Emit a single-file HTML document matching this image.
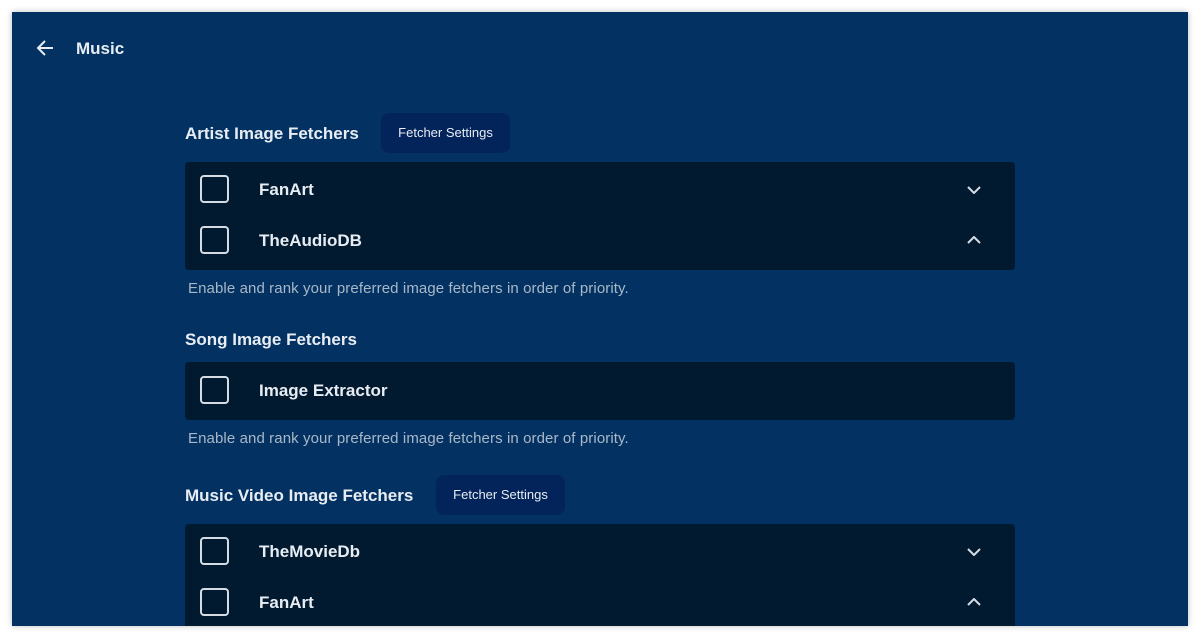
<!DOCTYPE html>
<html><head><style>
*{margin:0;padding:0;box-sizing:border-box}
body{width:1200px;height:638px;background:#fff;position:relative;overflow:hidden;font-family:"Liberation Sans",Arial,sans-serif}
#p{position:absolute;left:12px;top:12px;width:1176px;height:614px;background:#033262;box-shadow:0 0 6px rgba(0,0,0,.25);overflow:hidden}
.a{position:absolute}
.h{color:#e8edf3;font-weight:bold;font-size:17px}
.btn{position:absolute;background:#02245a;border-radius:8px;color:#e8edf3;font-size:13px;text-align:center;line-height:40px;height:40px}
.card{position:absolute;left:173px;width:830px;background:#011a30;border-radius:4px}
.cb{position:absolute;left:15px;width:29px;height:28px;border:2px solid #d6dce4;border-radius:4px}
.t{position:absolute;left:74px;color:#e8edf3;font-weight:bold;font-size:17px}
.help{position:absolute;left:176px;color:#a9b8c8;font-size:15px;letter-spacing:0.1px}
svg.ch{position:absolute;left:782px;width:14px;height:8px}
</style></head><body>
<div id="p">
<svg class="a" style="left:24px;top:27px" width="18" height="18" viewBox="0 0 18 18"><path d="M17 9H2M9 2L2 9l7 7" stroke="#e8edf3" stroke-width="2" fill="none"/></svg>
<div class="a h" style="left:64px;top:27px;font-size:17px">Music</div>

<div class="a h" style="left:173px;top:112px">Artist Image Fetchers</div>
<div class="btn" style="left:369px;top:101px;width:129px">Fetcher Settings</div>
<div class="card" style="top:150px;height:108px">
<div class="cb" style="top:13px"></div><div class="t" style="top:18px">FanArt</div>
<svg class="ch" style="top:24px" viewBox="0 0 14 8"><path d="M1 1l6 6 6-6" stroke="#d6dce4" stroke-width="2" fill="none"/></svg>
<div class="cb" style="top:64px"></div><div class="t" style="top:69px">TheAudioDB</div>
<svg class="ch" style="top:74px" viewBox="0 0 14 8"><path d="M1 7l6-6 6 6" stroke="#d6dce4" stroke-width="2" fill="none"/></svg>
</div>
<div class="help" style="top:268px">Enable and rank your preferred image fetchers in order of priority.</div>

<div class="a h" style="left:173px;top:318px">Song Image Fetchers</div>
<div class="card" style="top:350px;height:58px">
<div class="cb" style="top:14px"></div><div class="t" style="top:19px">Image Extractor</div>
</div>
<div class="help" style="top:418px">Enable and rank your preferred image fetchers in order of priority.</div>

<div class="a h" style="left:173px;top:474px">Music Video Image Fetchers</div>
<div class="btn" style="left:424px;top:463px;width:129px">Fetcher Settings</div>
<div class="card" style="top:512px;height:120px">
<div class="cb" style="top:13px"></div><div class="t" style="top:18px">TheMovieDb</div>
<svg class="ch" style="top:24px" viewBox="0 0 14 8"><path d="M1 1l6 6 6-6" stroke="#d6dce4" stroke-width="2" fill="none"/></svg>
<div class="cb" style="top:64px"></div><div class="t" style="top:69px">FanArt</div>
<svg class="ch" style="top:74px" viewBox="0 0 14 8"><path d="M1 7l6-6 6 6" stroke="#d6dce4" stroke-width="2" fill="none"/></svg>
</div>
</div>
</body></html>
